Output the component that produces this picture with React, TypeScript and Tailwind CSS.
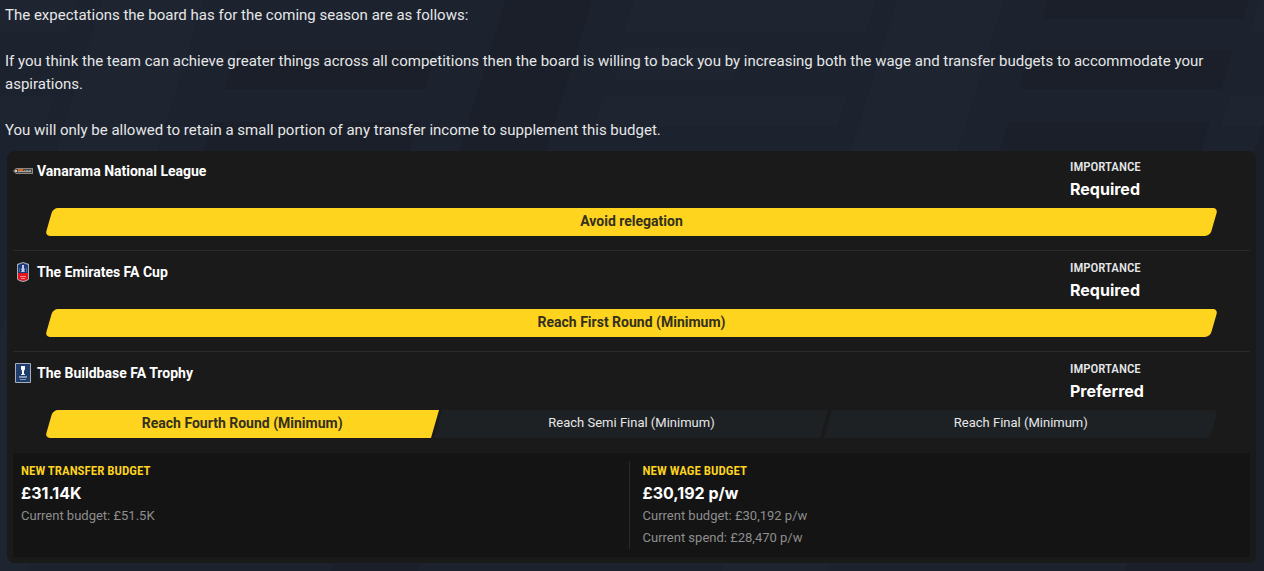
import React from 'react';

type BadgeKind = 'league' | 'cup' | 'trophy';

interface Expectation {
  competition: string;
  badge: BadgeKind;
  importance: string;
  options: string[];
  selected: number;
}

interface Budget {
  title: string;
  value: string;
  details: string[];
}

const expectations: Expectation[] = [
  {
    competition: 'Vanarama National League',
    badge: 'league',
    importance: 'Required',
    options: ['Avoid relegation'],
    selected: 0,
  },
  {
    competition: 'The Emirates FA Cup',
    badge: 'cup',
    importance: 'Required',
    options: ['Reach First Round (Minimum)'],
    selected: 0,
  },
  {
    competition: 'The Buildbase FA Trophy',
    badge: 'trophy',
    importance: 'Preferred',
    options: ['Reach Fourth Round (Minimum)', 'Reach Semi Final (Minimum)', 'Reach Final (Minimum)'],
    selected: 0,
  },
];

const budgets: Budget[] = [
  { title: 'NEW TRANSFER BUDGET', value: '£31.14K', details: ['Current budget: £51.5K'] },
  {
    title: 'NEW WAGE BUDGET',
    value: '£30,192 p/w',
    details: ['Current budget: £30,192 p/w', 'Current spend: £28,470 p/w'],
  },
];

// Slanted shapes behind the whole message
function Backdrop() {
  return (
    <svg
      className="absolute inset-0 -z-10 h-full w-full"
      viewBox="0 0 1264 571"
      preserveAspectRatio="xMidYMin slice"
      aria-hidden="true"
    >
      <g fill="#1e2531">
        <path d="M0 0H78L68 33H0Z" />
        <path d="M102 0H204L29 571H-73Z" />
        <path d="M0 97H54L45 126H0Z" />
        <path d="M634 0H876L866 32H624Z" />
        <path d="M897 0H1004L829 571H722Z" />
        <path d="M624 47H742L732 79H614Z" />
        <path d="M604 96H847L838 126H594Z" />
        <path d="M1260 0H1264V32H1250Z" />
        <path d="M1230 97H1264V126H1221Z" />
      </g>
      <g fill="#1a1f29">
        <path d="M506 0H592L417 571H331Z" />
        <path d="M237 50H437L425 89H224Z" />
        <path d="M213 122H418L407 157H202Z" />
        <path d="M1048 0H1249L1243 19H1042Z" />
        <path d="M1031 50H1233L1221 89H1019Z" />
        <path d="M1009 122H1210L1199 157H998Z" />
        <path d="M1264 122V571H1125Z" />
      </g>
    </svg>
  );
}

function Badge({ kind }: { kind: BadgeKind }) {
  if (kind === 'league') {
    return (
      <svg className="h-5 w-5 shrink-0" viewBox="0 0 20 20" aria-hidden="true">
        <path d="M3 7H20V13H3L0 10Z" fill="#8b8882" />
        <path d="M3 8H19V12H3L1 10Z" fill="#4b4845" />
        <path d="M2 9H4V11H2Z" fill="#d8d5cf" />
        <path d="M5 8H10V10H5Z" fill="#d9641e" />
        <path d="M5 10H18V11H5Z" fill="#a8a49e" />
        <path d="M11 9H12V10H11ZM13 9H15V10H13ZM16 9H18V10H16Z" fill="#8d8984" />
      </svg>
    );
  }
  if (kind === 'cup') {
    return (
      <svg className="h-5 w-5 shrink-0" viewBox="0 0 20 20" aria-hidden="true">
        <path d="M4 2L10 0L16 2V17Q15 19 10 20Q5 19 4 17Z" fill="#a9adb6" />
        <path d="M5 3L10 1L15 3V11H5Z" fill="#1d3a7d" />
        <path d="M5 11H15V17Q14 18 10 19Q6 18 5 17Z" fill="#e3141c" />
        <path d="M9 3H11V6L12 8L11 8L12 10H8L9 8L8 8L9 6Z" fill="#c3cde0" />
        <path d="M6 6H7V10H6ZM13 6H14V10H13Z" fill="#4a649d" />
        <path d="M7 14H13V15H7ZM8 16H12V17H8Z" fill="#f0949a" />
      </svg>
    );
  }
  return (
    <svg className="h-5 w-5 shrink-0" viewBox="0 0 20 20" aria-hidden="true">
      <rect x="2" width="16" height="20" rx="1" fill="#a9afb8" />
      <rect x="3" y="1" width="14" height="18" fill="#1f3d6d" />
      <path d="M8 3H12V6L11 8V11H9V8L8 6Z" fill="#fff" />
      <path d="M8 11H12V12H8Z" fill="#dfe5ee" />
      <path d="M6 13H14V15H6ZM7 16H13V17H7Z" fill="#8496b4" />
    </svg>
  );
}

function TargetBar({ options, selected }: { options: string[]; selected: number }) {
  return (
    <div className="mx-9 mt-2 flex gap-[3px]">
      {options.map((option, i) => (
        <div
          key={option}
          className={`relative isolate h-7 flex-1 text-center before:absolute before:inset-0 before:-z-10 before:-skew-x-16 first:before:rounded-l-[5px] last:before:rounded-r-[5px] ${
            i === selected
              ? 'text-[14px] leading-[27px] font-bold text-[#33301c] before:bg-[#ffd41f]'
              : 'text-[13px] leading-[25px] text-[#e6e7e8] before:bg-[#1e2124]'
          }`}
        >
          {option}
        </div>
      ))}
    </div>
  );
}

function ExpectationRow({ item }: { item: Expectation }) {
  return (
    <section className="border-b border-[#2a2a2a] pb-3.5 not-first:pt-px last:border-b-0 last:pb-[15px]">
      <div className="flex pt-1">
        <h2 className="flex flex-1 items-center gap-1 self-start pt-1 text-[14px] leading-6 font-bold text-white">
          <Badge kind={item.badge} />
          {item.competition}
        </h2>
        <div className="w-45">
          <div className="font-['Roboto_Condensed',sans-serif] text-[13px] leading-[23px] font-medium text-[#e6e7e8]">
            IMPORTANCE
          </div>
          <div className="font-['Inter',sans-serif] text-[16px] leading-[22px] font-bold text-white">
            {item.importance}
          </div>
        </div>
      </div>
      <TargetBar options={item.options} selected={item.selected} />
    </section>
  );
}

function BudgetCard({ budget }: { budget: Budget }) {
  return (
    <div className="flex-1 border-l border-[#2a2a2a] pl-[13px] first:border-l-0 first:pl-2">
      <h3 className="font-['Roboto_Condensed',sans-serif] text-[13px] leading-5 font-semibold text-[#ffd41f]">
        {budget.title}
      </h3>
      <p className="font-['Inter',sans-serif] text-[16px] leading-6 font-bold text-white">{budget.value}</p>
      {budget.details.map(line => (
        <p key={line} className="text-[13px] leading-[22px] text-[#8e8e8e]">
          {line}
        </p>
      ))}
    </div>
  );
}

export default function App() {
  return (
    <main className="relative isolate min-h-screen overflow-hidden bg-[#1c222e] pb-2 font-['Roboto',sans-serif]">
      <Backdrop />
      <div className="space-y-[23px] px-[5px] pt-1 text-[15px] leading-[23px] text-[#e6e7e8]">
        <p>The expectations the board has for the coming season are as follows:</p>
        <p>
          If you think the team can achieve greater things across all competitions then the board is willing to back
          you by increasing both the wage and transfer budgets to accommodate your aspirations.
        </p>
        <p>You will only be allowed to retain a small portion of any transfer income to supplement this budget.</p>
      </div>
      <div className="mt-[9px] mr-2 ml-[7px] rounded-lg bg-[#1a1a1a] px-[6px] pb-1.5">
        <div>
          {expectations.map(item => (
            <ExpectationRow key={item.competition} item={item} />
          ))}
        </div>
        <div className="flex bg-[#141414] py-2">
          {budgets.map(budget => (
            <BudgetCard key={budget.title} budget={budget} />
          ))}
        </div>
      </div>
    </main>
  );
}
